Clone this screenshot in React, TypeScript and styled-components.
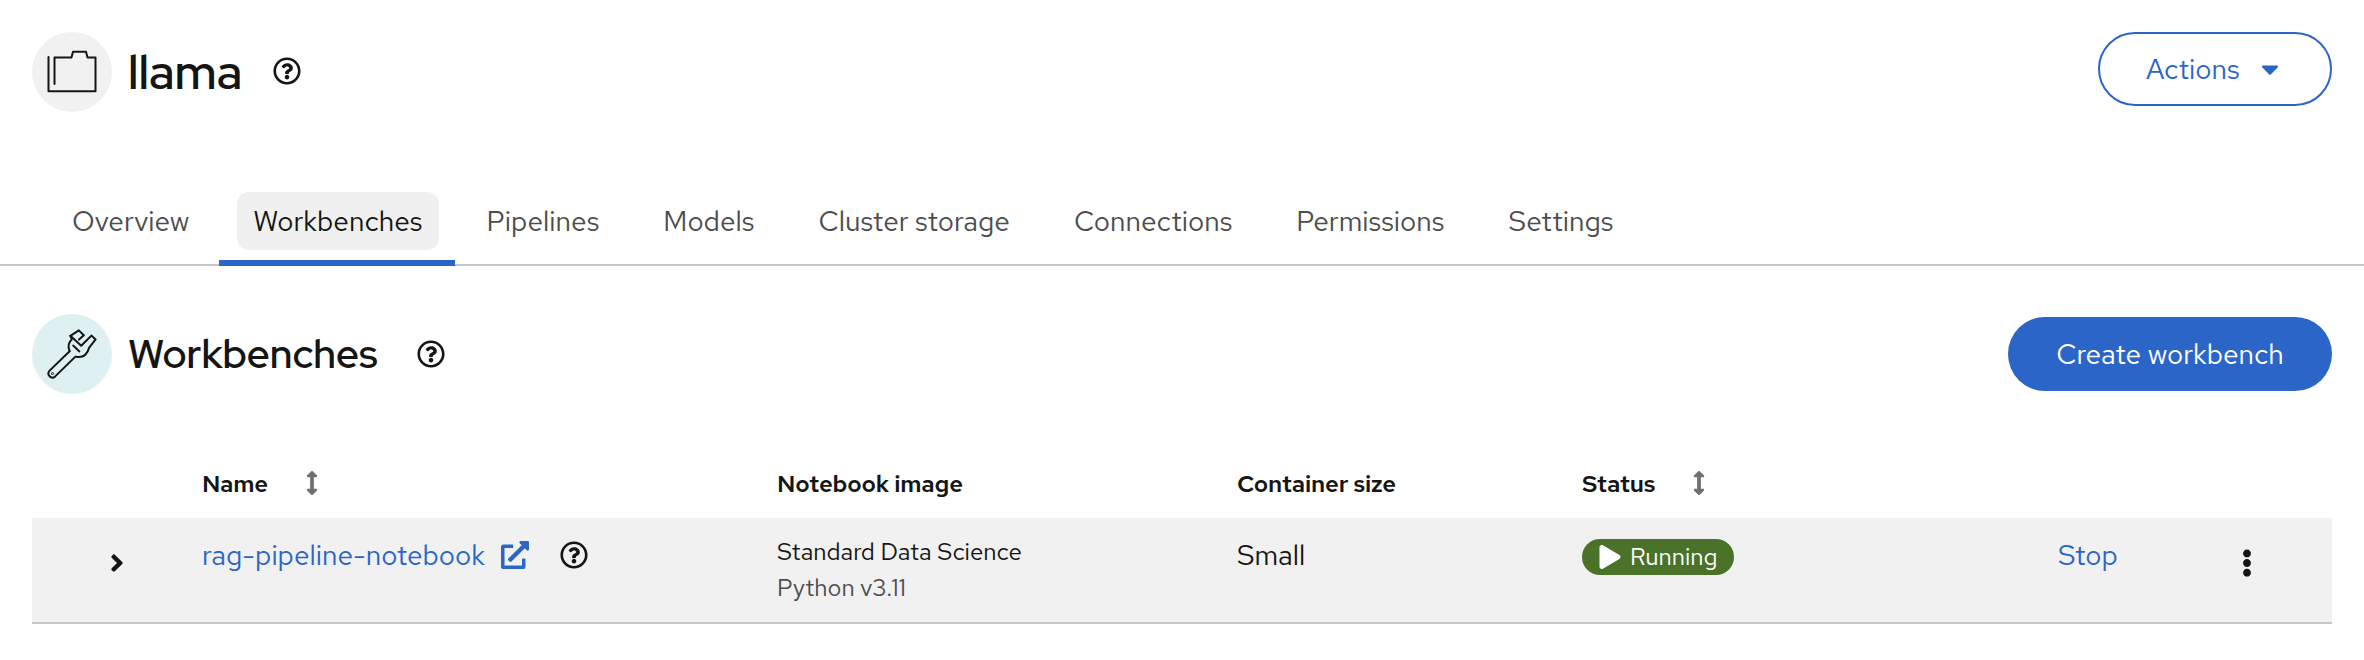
import React from "react";
import styled, { createGlobalStyle } from "styled-components";
import {
  FaRegQuestionCircle,
  FaCaretDown,
  FaArrowsAltV,
  FaAngleRight,
  FaExternalLinkAlt,
  FaPlay,
  FaEllipsisV,
} from "react-icons/fa";

const GlobalStyle = createGlobalStyle`
  *, *::before, *::after { box-sizing: border-box; }
  body {
    margin: 0;
    background: #fff;
    color: #151515;
    font-family: "Red Hat Text", Inter, "Liberation Sans", sans-serif;
    font-size: 28px;
    line-height: 42px;
  }
  button { font: inherit; color: inherit; border: 0; background: none; padding: 0; }
  svg { display: block; flex: none; }
`;

const Page = styled.div`
  display: flex;
  flex-direction: column;
  height: 660px;
  overflow: hidden;
`;

const Bar = styled.header<{ $top: number }>`
  display: flex;
  align-items: flex-start;
  justify-content: space-between;
  padding: ${(p) => p.$top}px 32px 0;
`;

const TitleGroup = styled.div`
  display: flex;
  align-items: center;
  height: 80px;
`;

const IconDisc = styled.div<{ $bg: string }>`
  display: grid;
  place-items: center;
  width: 80px;
  height: 80px;
  margin-right: 16px;
  border-radius: 50%;
  background: ${(p) => p.$bg};
`;

const Text = styled.span`
  display: inline-block;
  white-space: nowrap;
`;

const PageTitle = styled.h1`
  margin: 0 31px 0 0;
  width: 114px;
  font-family: "Red Hat Display", "Red Hat Text", Inter, sans-serif;
  font-size: 48px;
  font-weight: 600;
`;

const SectionTitle = styled.h2`
  margin: 0 37px 0 0;
  width: 252px;
  font-family: "Red Hat Display", "Red Hat Text", Inter, sans-serif;
  font-size: 40px;
  font-weight: 600;
`;

const TitleHelp = styled.span<{ $lift?: number }>`
  padding-bottom: ${(p) => p.$lift ?? 0}px;
`;

const ActionsButton = styled.button`
  display: flex;
  align-items: center;
  width: 234px;
  height: 74px;
  padding-left: 46px;
  gap: 16px;
  border: 2px solid #2b65c7;
  border-radius: 37px;
  color: #2b65c7;
`;

const PrimaryButton = styled.button`
  width: 324px;
  height: 74px;
  margin-top: 3px;
  border-radius: 37px;
  background: #2b65c7;
  color: #fff;
`;

const Tabs = styled.nav`
  display: flex;
  height: 74px;
  margin-top: 80px;
  padding-left: 40px;
  border-bottom: 2px solid #c7c7c7;
`;

const Tab = styled.button<{ $active?: boolean }>`
  display: flex;
  height: 74px;
  margin-left: ${(p) => (p.$active ? -2 : 0)}px;
  padding: 0 16px 0 ${(p) => (p.$active ? 18 : 16)}px;
  color: ${(p) => (p.$active ? "#151515" : "#4d4d4d")};
  border-bottom: ${(p) => (p.$active ? "6px solid #2b65c7" : "0")};
`;

const TabLabel = styled.span<{ $active?: boolean }>`
  display: flex;
  align-items: center;
  height: 58px;
  padding: 0 16px;
  border-radius: 12px;
  background: ${(p) => (p.$active ? "#f0f0f0" : "transparent")};
`;

const Table = styled.div`
  margin: 50px 32px 0;
`;

const Row = styled.div<{ $body?: boolean }>`
  display: grid;
  grid-template-columns: 170px 575px 460px 345px 476px 1fr;
  height: ${(p) => (p.$body ? 106 : 74)}px;
  background: ${(p) => (p.$body ? "#f1f1f1" : "transparent")};
  border-bottom: ${(p) => (p.$body ? "2px solid #c7c7c7" : "0")};
`;

const HeadCell = styled.div`
  display: flex;
  align-items: center;
  height: 79px;
  font-size: 24px;
  font-weight: 600;
  letter-spacing: -0.18px;
  svg { margin: 0 0 1px 32px; color: #707070; }
`;

const Cell = styled.div<{ $top?: number; $left?: number }>`
  display: flex;
  align-items: flex-start;
  padding: ${(p) => p.$top ?? 0}px 0 0 ${(p) => p.$left ?? 0}px;
`;

const ImageCell = styled.div`
  padding-top: 16px;
  font-size: 24px;
  line-height: 36px;
`;

const Muted = styled.div`
  color: #4d4d4d;
`;

const NotebookLink = styled.a`
  display: flex;
  align-items: center;
  height: 42px;
  margin-right: 31px;
  color: #2b65c7;
  svg { margin-left: 16px; }
`;

const HelpSlot = styled.span`
  display: flex;
  align-items: center;
  height: 42px;
`;

const Badge = styled.span`
  display: flex;
  align-items: center;
  width: 152px;
  height: 36px;
  padding-left: 16px;
  gap: 8px;
  border-radius: 18px;
  background: #4a7229;
  color: #fff;
  font-size: 24px;
`;

const StopButton = styled.button`
  width: 175px;
  text-align: left;
  color: #2b65c7;
`;

const MenuSlot = styled.span`
  padding-top: 15px;
`;

const ProjectIcon = () => (
  <svg width="50" height="44" viewBox="0 0 50 44" fill="none" stroke="#151515" strokeWidth="2" strokeLinecap="round" strokeLinejoin="round">
    <path d="M1.5 7V41.3H48.5V7.5H40.5L39 1.8H26L24.5 7.5H7.5V34" />
  </svg>
);

const WrenchIcon = () => (
  <svg width="50" height="50" viewBox="0 0 50 50" fill="none" stroke="#151515" strokeWidth="2" strokeLinecap="round" strokeLinejoin="round">
    <path d="M22.6 22.2L2.6 41.6C-.8 45.4 4.2 51 8.2 47.4L28.4 27.6C35.5 29.4 40 26 42.2 18.6L48.6 10.4L44.4 6.6L34.2 16.8L23.4 6.8L31.8 1.4L36.8 6.2L32 10.6" />
    <path d="M23.4 6.8L24.8 10.4C21.2 13.4 21 18 22.6 22.2M26.2 16.6L32.4 22.4" />
    <circle cx="5.5" cy="44.6" r=".4" />
  </svg>
);

const tabs = [
  "Overview",
  "Workbenches",
  "Pipelines",
  "Models",
  "Cluster storage",
  "Connections",
  "Permissions",
  "Settings",
];

export default function App() {
  return (
    <Page>
      <GlobalStyle />
      <Bar $top={32}>
        <TitleGroup>
          <IconDisc $bg="#f1f1f1"><ProjectIcon /></IconDisc>
          <PageTitle><Text>llama</Text></PageTitle>
          <TitleHelp $lift={2}><FaRegQuestionCircle size={28} /></TitleHelp>
        </TitleGroup>
        <ActionsButton>
          <Text>Actions</Text>
          <FaCaretDown size={28} />
        </ActionsButton>
      </Bar>
      <Tabs>
        {tabs.map((label) => (
          <Tab key={label} $active={label === "Workbenches"}>
            <TabLabel $active={label === "Workbenches"}><Text>{label}</Text></TabLabel>
          </Tab>
        ))}
      </Tabs>
      <Bar $top={48}>
        <TitleGroup>
          <IconDisc $bg="#dff0f2"><WrenchIcon /></IconDisc>
          <SectionTitle><Text>Workbenches</Text></SectionTitle>
          <TitleHelp><FaRegQuestionCircle size={28} /></TitleHelp>
        </TitleGroup>
        <PrimaryButton><Text>Create workbench</Text></PrimaryButton>
      </Bar>
      <Table>
        <Row>
          <div />
          <HeadCell><Text>Name</Text><FaArrowsAltV size={24} /></HeadCell>
          <HeadCell><Text>Notebook image</Text></HeadCell>
          <HeadCell><Text>Container size</Text></HeadCell>
          <HeadCell><Text>Status</Text><FaArrowsAltV size={24} /></HeadCell>
        </Row>
        <Row $body>
          <Cell $top={31} $left={71}><FaAngleRight size={28} /></Cell>
          <Cell $top={16}>
            <NotebookLink><Text>rag-pipeline-notebook</Text><FaExternalLinkAlt size={28} /></NotebookLink>
            <HelpSlot><FaRegQuestionCircle size={28} /></HelpSlot>
          </Cell>
          <ImageCell>
            <div><Text>Standard Data Science</Text></div>
            <Muted><Text>Python v3.11</Text></Muted>
          </ImageCell>
          <Cell $top={16}><Text>Small</Text></Cell>
          <Cell $top={21}><Badge><FaPlay size={24} /><Text>Running</Text></Badge></Cell>
          <Cell $top={16}>
            <StopButton><Text>Stop</Text></StopButton>
            <MenuSlot><FaEllipsisV size={28} /></MenuSlot>
          </Cell>
        </Row>
      </Table>
    </Page>
  );
}
